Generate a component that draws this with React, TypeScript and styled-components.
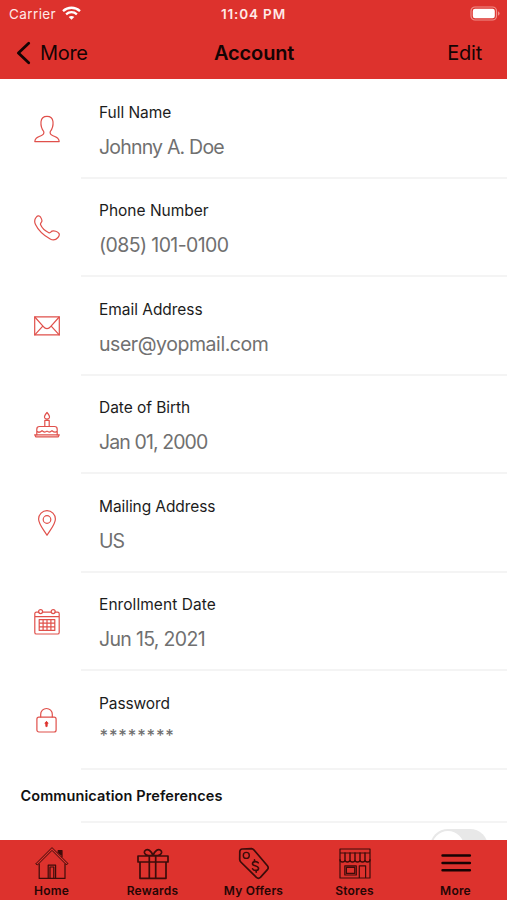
import React from 'react';
import styled, { createGlobalStyle } from 'styled-components';

const RED = '#dd322d';

const GlobalStyle = createGlobalStyle`
  * { box-sizing: border-box; }
  body { margin: 0; background: #fff; }
`;

const Screen = styled.div`
  width: 507px;
  height: 900px;
  display: flex;
  flex-direction: column;
  overflow: hidden;
  background: #fff;
  font-family: Inter, "Liberation Sans", sans-serif;
  white-space: nowrap;
`;

const Header = styled.header`
  flex: none;
  height: 79px;
  background: ${RED};
`;

const StatusBar = styled.div`
  height: 27px;
  padding: 0 7px 0 9px;
  display: grid;
  grid-template-columns: 212px auto 1fr;
  align-items: center;
  color: #ffe9e7;
  font-size: 13.5px;
`;

const Carrier = styled.div`
  display: flex;
  align-items: center;
  gap: 6px;
  letter-spacing: 0.4px;
`;

const Clock = styled.div`
  font-weight: 600;
  font-size: 13.5px;
  letter-spacing: 0.85px;
`;

const BatterySlot = styled.div`
  display: flex;
  justify-content: flex-end;
`;

const NavBar = styled.div`
  height: 51px;
  padding: 0 25px 0 16px;
  display: grid;
  grid-template-columns: 198px 80px 1fr;
  align-items: center;
  color: #150404;
  font-size: 20px;
`;

const BackButton = styled.div`
  display: flex;
  align-items: center;
  gap: 9px;
  letter-spacing: -0.3px;
`;

const Title = styled.h1`
  margin: 0;
  font-size: 20px;
  font-weight: 600;
  letter-spacing: -0.15px;
`;

const EditButton = styled.div`
  text-align: right;
  letter-spacing: -0.2px;
`;

const Content = styled.main`
  flex: 1;
  min-height: 0;
  padding-top: 1px;
  overflow: hidden;
`;

const Row = styled.section`
  height: 98.5px;
  display: flex;
`;

const IconCell = styled.div`
  flex: none;
  width: 81px;
  padding-left: 33.3px;
  display: flex;
  align-items: center;
`;

const RowIcon = styled.svg`
  width: 28px;
  height: 28px;
  fill: none;
  stroke: #e0504b;
  stroke-width: 1.2;
  stroke-linejoin: round;
  stroke-linecap: round;
`;

const RowBody = styled.div`
  flex: 1;
  padding: 22.5px 0 0 18px;
  border-bottom: 2px solid #f4f4f4;
`;

const Label = styled.div<{ $track: number }>`
  height: 20px;
  line-height: 20px;
  font-size: 15.5px;
  color: #1c1c1c;
  letter-spacing: ${(p) => p.$track}px;
`;

const Value = styled.div<{ $track: number; $masked?: boolean }>`
  margin-top: ${(p) => (p.$masked ? 9 : 12)}px;
  padding-left: ${(p) => (p.$masked ? 0.5 : 0)}px;
  height: 24px;
  line-height: 24px;
  font-size: ${(p) => (p.$masked ? 16.5 : 19.5)}px;
  font-weight: ${(p) => (p.$masked ? 500 : 400)};
  color: #707070;
  letter-spacing: ${(p) => p.$track}px;
`;

const SectionHead = styled.div`
  height: 53.5px;
  display: grid;
  grid-template-rows: 1fr 2px;
`;

const SectionTitle = styled.h2`
  margin: 0;
  padding-left: 20.5px;
  align-self: center;
  font-size: 14.5px;
  font-weight: 600;
  color: #111;
  letter-spacing: 0.1px;
`;

const SectionRule = styled.div`
  margin-left: 81px;
  background: #f4f4f4;
`;

const ToggleRow = styled.div`
  display: flex;
  justify-content: flex-end;
  padding: 6px 19.5px 0 0;
`;

const Toggle = styled.div`
  width: 58px;
  height: 36px;
  padding: 2px;
  border-radius: 18px;
  background: #e8e8e8;
`;

const Knob = styled.div`
  width: 32px;
  height: 32px;
  border-radius: 50%;
  background: #fff;
`;

const TabBar = styled.nav`
  flex: none;
  height: 60px;
  display: grid;
  grid-template-columns: repeat(5, 101px);
  justify-content: center;
  background: ${RED};
`;

const Tab = styled.div`
  display: flex;
  flex-direction: column;
  align-items: center;
  padding-top: 5px;
`;

const TabIcon = styled.svg`
  width: 36px;
  height: 36px;
  fill: none;
  stroke: #3c0c0a;
  stroke-width: 1.4;
  stroke-linejoin: round;
  stroke-linecap: round;
`;

const TabLabel = styled.div<{ $track: number }>`
  margin-top: 2px;
  height: 16px;
  line-height: 16px;
  font-size: 12px;
  font-weight: 600;
  color: #260605;
  letter-spacing: ${(p) => p.$track}px;
`;

const person = (
  <path d="M1.8 26.6C2 22.8 4.5 22.3 8 20.8C10.6 19.7 11.3 18.3 10.7 16.5C8.7 13.8 7.7 10 8 6.7C8.4 3.1 10.9 1.4 14 1.4S19.6 3.1 20 6.7C20.3 10 19.3 13.8 17.3 16.5C16.7 18.3 17.4 19.7 20 20.8C23.5 22.3 26 22.8 26.2 26.6Z" />
);
const phone = (
  <path d="M3.3 3.2C4.8 1.3 6.6 1.8 7.6 3.2C8.7 5 9.4 6.3 8.8 7.5C8.2 8.8 7.1 9.2 7.5 10.6C8.7 13.5 12.5 17.2 15.8 18.7C17.4 19.4 18 17.6 19 17.1C21 16.3 24.6 17.5 25.9 19.4C26.9 21.1 26 22.4 25 23.5C22.8 26 19.7 26.5 17.2 25C11.4 21.7 5.3 16.3 2.5 10.4C1.1 7.6 1.6 5.2 3.3 3.2Z" />
);
const mail = (
  <>
    <rect x="1.7" y="4.9" width="24.6" height="18" />
    <path d="M1.8 5L10.4 14.6C12.5 17.3 15.5 17.3 17.6 14.6L26.2 5M1.8 22.8L9.8 14.1M26.2 22.8L18.2 14.1" />
  </>
);
const cake = (
  <>
    <path d="M14 1.5C11.8 4 11 5 11.6 6.7C12.4 8.5 15.6 8.5 16.4 6.7C17 5 16.2 4 14 1.5ZM14 7.8V9.2" />
    <path d="M11.8 15.4V9.4H16.2V15.4M3.8 24V18.2C3.8 16.4 4.7 15.5 6.5 15.5H21.5C23.3 15.5 24.2 16.4 24.2 18.2V24M3.8 20.2C5.5 22 7.3 21.3 9 19.7C10.7 21.5 12.4 21.4 14 20.1C15.7 21.5 17.4 21.4 19 19.7C20.8 21.3 22.6 22 24.2 20.2" />
    <path d="M1.7 23.8H26.3L25.3 25.8H2.7Z" />
  </>
);
const pin = (
  <>
    <path d="M14 26.3C11.6 21.8 5.6 15.6 5.6 10A8.4 8.4 0 0 1 22.4 10C22.4 15.6 16.4 21.8 14 26.3Z" />
    <circle cx="14" cy="10.5" r="3.8" />
  </>
);
const calendar = (
  <>
    <path d="M5.8 4.2H3.4Q1.8 4.2 1.8 5.8V24.4Q1.8 26 3.4 26H24.6Q26.2 26 26.2 24.4V5.8Q26.2 4.2 24.6 4.2H22M9.4 4.2H18.2M1.8 8.7H26.2" />
    <circle cx="7.6" cy="3.6" r="2" />
    <circle cx="20.2" cy="3.6" r="2" />
    <path d="M6.2 11.6H21.8V22.4H6.2ZM6.2 15.2H21.8M6.2 18.8H21.8M10.1 11.6V22.4M14 11.6V22.4M17.9 11.6V22.4" />
  </>
);
const lock = (
  <>
    <rect x="3.9" y="11.2" width="19.2" height="14.8" rx="2" />
    <path d="M7.7 11V8.3A5.8 5.8 0 0 1 19.3 8.3V11" />
    <path d="M13.5 15.8A1.5 1.5 0 0 1 14.3 18.5L14.1 20.6H12.9L12.7 18.5A1.5 1.5 0 0 1 13.5 15.8Z" fill="#dd322d" stroke="#dd322d" strokeWidth="0.8" />
  </>
);

type Field = {
  label: string;
  value: string;
  icon: React.ReactNode;
  lt: number;
  vt: number;
  masked?: boolean;
};

const fields: Field[] = [
  { label: 'Full Name', value: 'Johnny A. Doe', icon: person, lt: -0.05, vt: -0.8 },
  { label: 'Phone Number', value: '(085) 101-0100', icon: phone, lt: 0, vt: -0.6 },
  { label: 'Email Address', value: 'user@yopmail.com', icon: mail, lt: -0.04, vt: -0.45 },
  { label: 'Date of Birth', value: 'Jan 01, 2000', icon: cake, lt: -0.05, vt: -0.9 },
  { label: 'Mailing Address', value: 'US', icon: pin, lt: -0.08, vt: -0.9 },
  { label: 'Enrollment Date', value: 'Jun 15, 2021', icon: calendar, lt: 0.06, vt: -0.68 },
  { label: 'Password', value: '********', icon: lock, lt: -0.1, vt: 0.82, masked: true },
];

const home = (
  <>
    <path d="M2 18.6L18 2.6L34 18.6L32.2 19.6L18 5.4L3.8 19.6Z" strokeWidth="1" />
    <path d="M5.2 19V33.4H31V19M14.2 33.4V20.2H21.6V33.4M16 33.4V22H19.8V33.4M24.2 7.5V5.6H28V11.8" strokeWidth="1.2" />
    <path d="M25 6.4H27.2V9.8L25 8Z" fill="#3c0c0a" />
  </>
);
const gift = (
  <>
    <path d="M3 11H33V17H3ZM5 17V33.3H31V17M14.3 11V33.3M20.7 11V33.3M18 10.6C15 10.8 10 10.8 9.4 7.7C9 5 12 3.8 14.3 5.3C16 6.5 17.3 8.4 18 10.6C18.7 8.4 20 6.5 21.7 5.3C24 3.8 27 5 26.6 7.7C26 10.8 21 10.8 18 10.6Z" strokeWidth="1.7" />
  </>
);
const tag = (
  <>
    <path d="M3.8 6.4Q4 4.2 6.2 4L15.6 3.7Q16.8 3.8 17.8 4.8L31.4 20.8Q33 22.8 31.4 24.6L24.4 32.4Q22.4 34.2 20.4 32.4L4.8 17Q3.8 16 3.7 14.5Z" strokeWidth="1.7" />
    <circle cx="10.3" cy="10.4" r="3" />
    <path d="M22.2 17.8C20.9 16 16.7 16.2 16.5 18.6C16.4 21.4 21.9 20 22.5 23C22.8 25.8 18.1 26.2 16.6 23.8M18.5 14.9V16.8M20.2 25.3V27.2" strokeWidth="1.6" />
  </>
);
const store = (
  <>
    <path d="M3 4H33V8H3ZM3 8V33H33V8M7.8 20.8H19.3V30H7.8ZM9.4 22.4H17.7V28.4H9.4ZM22.3 33V20.8H28.6V33" strokeWidth="1.2" />
    <path d="M3 14.8A2.5 2.2 0 0 0 8 14.8A2.5 2.2 0 0 0 13 14.8A2.5 2.2 0 0 0 18 14.8A2.5 2.2 0 0 0 23 14.8A2.5 2.2 0 0 0 28 14.8A2.5 2.2 0 0 0 33 14.8M8 8V14.8M13 8V14.8M18 8V14.8M23 8V14.8M28 8V14.8" strokeWidth="1.4" />
  </>
);
const menu = <path d="M4.6 10.5H31.8M4.6 18H31.8M4.6 25.2H31.8" stroke="#160303" strokeWidth="2.6" />;

const tabs = [
  { label: 'Home', icon: home, track: 0.2 },
  { label: 'Rewards', icon: gift, track: 0.2 },
  { label: 'My Offers', icon: tag, track: 0.2 },
  { label: 'Stores', icon: store, track: 0.2 },
  { label: 'More', icon: menu, track: 0.2 },
];

export default function App() {
  return (
    <>
      <GlobalStyle />
      <Screen>
        <Header>
          <StatusBar>
            <Carrier>
              Carrier
              <svg width="19" height="15" viewBox="0 0 19 15" fill="none" stroke="#fff" strokeWidth="2.3">
                <path d="M1 5.2C5.8 0.6 13.2 0.6 18 5.2M4.1 8.3C7.2 5.4 11.8 5.4 14.9 8.3" />
                <path d="M9.5 13.8L6.7 11C8.3 9.5 10.7 9.5 12.3 11Z" fill="#fff" stroke="none" />
              </svg>
            </Carrier>
            <Clock>11:04 PM</Clock>
            <BatterySlot>
              <svg width="30" height="15" viewBox="0 0 30 15">
                <rect x="1" y="1" width="25.5" height="13" rx="4" fill="none" stroke="#f08f8b" strokeWidth="1.2" />
                <rect x="2.8" y="2.8" width="22" height="9.4" rx="2.2" fill="#fff" />
                <path d="M28 5.3Q29.6 6 29.6 7.5T28 9.7Z" fill="#f08f8b" />
              </svg>
            </BatterySlot>
          </StatusBar>
          <NavBar>
            <BackButton>
              <svg width="15" height="24" viewBox="0 0 15 24" fill="none" stroke="#150404" strokeWidth="2.8" strokeLinecap="round" strokeLinejoin="round">
                <path d="M12.7 2.2L2.4 12L12.7 21.8" />
              </svg>
              More
            </BackButton>
            <Title>Account</Title>
            <EditButton>Edit</EditButton>
          </NavBar>
        </Header>
        <Content>
          {fields.map((f) => (
            <Row key={f.label}>
              <IconCell>
                <RowIcon viewBox="0 0 28 28">{f.icon}</RowIcon>
              </IconCell>
              <RowBody>
                <Label $track={f.lt}>{f.label}</Label>
                <Value $track={f.vt} $masked={f.masked}>{f.value}</Value>
              </RowBody>
            </Row>
          ))}
          <SectionHead>
            <SectionTitle>Communication Preferences</SectionTitle>
            <SectionRule />
          </SectionHead>
          <ToggleRow>
            <Toggle>
              <Knob />
            </Toggle>
          </ToggleRow>
        </Content>
        <TabBar>
          {tabs.map((t) => (
            <Tab key={t.label}>
              <TabIcon viewBox="0 0 36 36">{t.icon}</TabIcon>
              <TabLabel $track={t.track}>{t.label}</TabLabel>
            </Tab>
          ))}
        </TabBar>
      </Screen>
    </>
  );
}
